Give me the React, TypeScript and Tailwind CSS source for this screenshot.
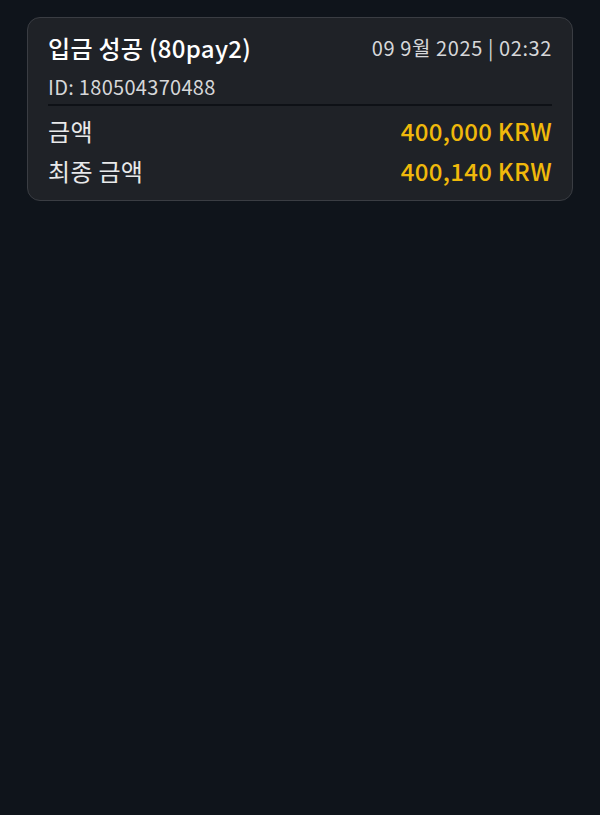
import React from "react";

// 입금 내역 카드
const rows = [
  { label: "금액", value: "400,000 KRW" },
  { label: "최종 금액", value: "400,140 KRW" },
];

export default function App() {
  return (
    <div
      className="min-h-[815px] w-full bg-[#0f141b] px-[27px] pt-[17px] tracking-[0.3px]"
      style={{ fontFamily: '"Noto Sans CJK KR", "Noto Sans", sans-serif' }}
    >
      <div className="rounded-[13px] border border-[#3a3d43] bg-[#1f2227] px-5 pt-[15px] pb-[9px]">
        <div className="flex items-center justify-between">
          <span className="text-[24px] font-medium leading-[30px] text-white">
            입금 성공 (80pay2)
          </span>
          <span className="text-[20px] leading-[26px] tracking-[0.6px] text-[#d6d7d9]">
            09 9월 2025 | 02:32
          </span>
        </div>
        <div className="mt-[11px] text-[20px] leading-[26px] text-[#d6d7d9]">
          ID: 180504370488
        </div>
        <div className="mt-[4px] h-[2px] bg-[#0e1116]" />
        <div className="mt-[5px] flex flex-col">
          {rows.map((r) => (
            <div
              key={r.label}
              className="flex h-[40px] items-center justify-between text-[24px]"
            >
              <span className="text-[#e8e9ea]">{r.label}</span>
              <span className="font-medium text-[#f0b90b]">{r.value}</span>
            </div>
          ))}
        </div>
      </div>
    </div>
  );
}
